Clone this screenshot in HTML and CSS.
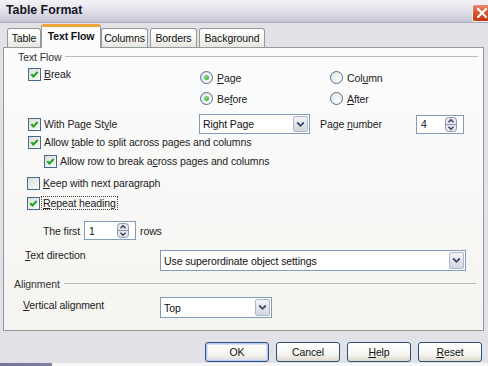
FILE: index.html
```html
<!DOCTYPE html>
<html lang="en">
  <head>
    <meta charset="UTF-8" />
    <title>Table Format</title>
    <link rel="stylesheet" href="styles.css">
  </head>
  <body>
    <div class="dialog">
      <!-- Title bar -->
      <div class="titlebar">
        <span class="title">Table Format</span>
        <span class="close-btn">
          <svg width="12" height="12" viewBox="0 0 12 12"><path d="M2 2 L10 10 M10 2 L2 10" stroke="#fff" stroke-width="2.2" stroke-linecap="round"/></svg>
        </span>
      </div>

      <!-- Tabs -->
      <div class="tabs">
        <div class="tab tab-table">Table</div>
        <div class="tab tab-flow active">Text Flow</div>
        <div class="tab tab-columns">Columns</div>
        <div class="tab tab-borders">Borders</div>
        <div class="tab tab-background">Background</div>
      </div>

      <!-- Tab page -->
      <div class="panel">
        <div class="section-head head-flow"><span>Text Flow</span><span class="rule"></span></div>

        <div class="break-row">
          <div class="break-col">
            <div class="opt">
              <span class="check"><svg width="11" height="11" viewBox="0 0 11 11"><path d="M2.3 5.3 L4.4 7.5 L8.7 3" fill="none" stroke="#21a121" stroke-width="2"/></svg></span>
              <span><u>B</u>reak</span>
            </div>
          </div>
          <div class="radio-grid">
            <div class="opt"><span class="radio on"></span><span><u>P</u>age</span></div>
            <div class="opt"><span class="radio"></span><span>Col<u>u</u>mn</span></div>
            <div class="opt"><span class="radio on"></span><span>Be<u>f</u>ore</span></div>
            <div class="opt"><span class="radio"></span><span><u>A</u>fter</span></div>
          </div>
        </div>

        <div class="style-row">
          <div class="opt opt-wide">
            <span class="check"><svg width="11" height="11" viewBox="0 0 11 11"><path d="M2.3 5.3 L4.4 7.5 L8.7 3" fill="none" stroke="#21a121" stroke-width="2"/></svg></span>
            <span>With Page St<u>y</u>le</span>
          </div>
          <div class="select sel-page">
            <span class="sel-text">Right Page</span>
            <span class="sel-btn"><svg width="9" height="7" viewBox="0 0 9 7"><path d="M1.2 1.5 L4.5 4.8 L7.8 1.5" fill="none" stroke="#3b4a6b" stroke-width="1.8"/></svg></span>
          </div>
          <span class="page-num-label">Page <u>n</u>umber</span>
          <div class="spin spin-page">
            <span class="spin-val">4</span>
            <svg class="spin-btn" width="12" height="15" viewBox="0 0 12 15"><rect x="0.5" y="0.5" width="11" height="14" rx="3" fill="#e4e5ec" stroke="#8e97ad"/><line x1="1" y1="7.5" x2="11" y2="7.5" stroke="#8e97ad"/><path d="M3.5 5.2 L6 2.8 L8.5 5.2" fill="none" stroke="#34405e" stroke-width="1.4"/><path d="M3.5 9.8 L6 12.2 L8.5 9.8" fill="none" stroke="#34405e" stroke-width="1.4"/></svg>
          </div>
        </div>

        <div class="opt row-split">
          <span class="check"><svg width="11" height="11" viewBox="0 0 11 11"><path d="M2.3 5.3 L4.4 7.5 L8.7 3" fill="none" stroke="#21a121" stroke-width="2"/></svg></span>
          <span>Allow <u>t</u>able to split across pages and columns</span>
        </div>

        <div class="opt row-break">
          <span class="check"><svg width="11" height="11" viewBox="0 0 11 11"><path d="M2.3 5.3 L4.4 7.5 L8.7 3" fill="none" stroke="#21a121" stroke-width="2"/></svg></span>
          <span>Allow row to break a<u>c</u>ross pages and columns</span>
        </div>

        <div class="opt row-keep">
          <span class="check"></span>
          <span><u>K</u>eep with next paragraph</span>
        </div>

        <div class="opt row-repeat">
          <span class="check"><svg width="11" height="11" viewBox="0 0 11 11"><path d="M2.3 5.3 L4.4 7.5 L8.7 3" fill="none" stroke="#21a121" stroke-width="2"/></svg></span>
          <span class="focus"><u>R</u>epeat heading</span>
        </div>

        <div class="first-row">
          <span class="first-label">The first</span>
          <div class="spin spin-first">
            <span class="spin-val">1</span>
            <svg class="spin-btn" width="12" height="15" viewBox="0 0 12 15"><rect x="0.5" y="0.5" width="11" height="14" rx="3" fill="#e4e5ec" stroke="#8e97ad"/><line x1="1" y1="7.5" x2="11" y2="7.5" stroke="#8e97ad"/><path d="M3.5 5.2 L6 2.8 L8.5 5.2" fill="none" stroke="#34405e" stroke-width="1.4"/><path d="M3.5 9.8 L6 12.2 L8.5 9.8" fill="none" stroke="#34405e" stroke-width="1.4"/></svg>
          </div>
          <span class="rows-label">rows</span>
        </div>

        <div class="field-row dir-row">
          <span class="field-label"><u>T</u>ext direction</span>
          <div class="select sel-dir">
            <span class="sel-text">Use superordinate object settings</span>
            <span class="sel-btn"><svg width="9" height="7" viewBox="0 0 9 7"><path d="M1.2 1.5 L4.5 4.8 L7.8 1.5" fill="none" stroke="#3b4a6b" stroke-width="1.8"/></svg></span>
          </div>
        </div>

        <div class="section-head head-align"><span>Alignment</span><span class="rule"></span></div>

        <div class="field-row valign-row">
          <span class="field-label"><u>V</u>ertical alignment</span>
          <div class="select sel-valign">
            <span class="sel-text">Top</span>
            <span class="sel-btn"><svg width="9" height="7" viewBox="0 0 9 7"><path d="M1.2 1.5 L4.5 4.8 L7.8 1.5" fill="none" stroke="#3b4a6b" stroke-width="1.8"/></svg></span>
          </div>
        </div>
      </div>

      <!-- Buttons -->
      <div class="button-row">
        <button class="btn default">OK</button>
        <button class="btn">Cancel</button>
        <button class="btn"><u>H</u>elp</button>
        <button class="btn"><u>R</u>eset</button>
      </div>

      <div class="taskbar"></div>
    </div>
  </body>
</html>
```

FILE: styles.css
```css
body {
  margin: 0;
  background: #e2e1e6;
  font-family: "Liberation Sans", Arial, sans-serif;
  font-size: 10.5px;
  letter-spacing: -0.1px;
  color: #222;
}

u {
  text-underline-offset: 1px;
}

.dialog {
  width: 488px;
  height: 366px;
  overflow: hidden;
  display: flex;
  flex-direction: column;
  background: #e2e1e6;
}

/* Title bar */
.titlebar {
  flex: none;
  height: 22px;
  display: flex;
  align-items: flex-start;
  background: linear-gradient(#f3f3f7, #e1e1ea 50%, #c4c4d4);
  border-bottom: 1px solid #a9a9bb;
}

.title {
  padding: 3px 0 0 6px;
  font-size: 12.3px;
  line-height: 14px;
  letter-spacing: 0;
  font-weight: bold;
  color: #161626;
}

.close-btn {
  margin: 4px -6px 0 auto;
  width: 22px;
  height: 18px;
  box-sizing: border-box;
  border: 1px solid #f4f0f0;
  border-radius: 3px;
  background: linear-gradient(#e98a70, #d5532f 50%, #c0390f);
  display: flex;
  align-items: center;
  justify-content: flex-start;
  padding-left: 3px;
}

/* Tabs */
.tabs {
  flex: none;
  height: 24px;
  display: flex;
  align-items: flex-end;
  padding-left: 7px;
}

.tab {
  height: 19px;
  box-sizing: border-box;
  border: 1px solid #919b9c;
  border-bottom: none;
  border-radius: 3px 3px 0 0;
  background: linear-gradient(#ffffff, #f4f4f1 60%, #e6e5de);
  text-align: center;
  line-height: 18px;
  color: #111;
}

.tab-table { width: 34px; }
.tab-columns { width: 47px; }
.tab-borders { width: 47px; margin-left: 2px; }
.tab-background { width: 66px; margin-left: 2px; }

.tab.active {
  position: relative;
  z-index: 2;
  width: 60px;
  height: 24px;
  margin-bottom: -1px;
  border-top: 3px solid #f0a43a;
  background: #fcfcfe;
  font-weight: bold;
  line-height: 19px;
}

/* Tab page */
.panel {
  flex: none;
  width: 481px;
  height: 284px;
  margin-left: 3px;
  box-sizing: border-box;
  border: 1px solid #919b9c;
  background: linear-gradient(#fcfcfd, #f5f4f0);
}

.section-head {
  height: 13px;
  display: flex;
  align-items: center;
  color: #333;
}

.section-head .rule {
  flex: 1;
  height: 0;
  border-top: 1px solid #bcbcb4;
  margin-left: 4px;
}

.head-flow {
  margin-top: 2px;
  padding-left: 14px;
}

.head-flow .rule { margin-right: 5px; }

.head-align {
  margin-top: 6px;
  padding-left: 10px;
}

.head-align .rule { margin-right: 7px; }

.opt {
  height: 14px;
  display: flex;
  align-items: center;
  gap: 3px;
  white-space: nowrap;
}

.check {
  flex: none;
  width: 13px;
  height: 13px;
  box-sizing: border-box;
  border: 1px solid #46698f;
  background: linear-gradient(135deg, #dcdcd6, #fbfbf9);
  display: flex;
}

.radio {
  flex: none;
  width: 13px;
  height: 13px;
  box-sizing: border-box;
  border: 1px solid #4a719c;
  border-radius: 50%;
  background: radial-gradient(circle at 65% 65%, #ffffff, #dcdcd6);
  display: flex;
  align-items: center;
  justify-content: center;
  margin-right: 1px;
}

.radio.on::after {
  content: "";
  width: 5px;
  height: 5px;
  border-radius: 50%;
  background: radial-gradient(circle at 35% 35%, #8ee08e, #1f9e1f);
}

.break-row {
  margin-top: 4px;
  display: flex;
}

.break-col {
  width: 196px;
  box-sizing: border-box;
  padding: 0 0 0 24px;
}

.radio-grid {
  display: grid;
  grid-template-columns: 130px auto;
  grid-auto-rows: 21px;
  align-items: center;
}

.style-row {
  margin-top: 5px;
  height: 20px;
  display: flex;
  align-items: center;
}

.opt-wide {
  width: 195px;
  box-sizing: border-box;
  padding-left: 24px;
}

.select {
  display: flex;
  align-items: stretch;
  box-sizing: border-box;
  border: 1px solid #7f9db9;
  background: #fff;
}

.sel-text {
  flex: 1;
  padding-left: 3px;
  display: flex;
  align-items: center;
  color: #111;
}

.sel-btn {
  width: 15px;
  margin: 1px;
  box-sizing: border-box;
  border: 1px solid #b0b6c6;
  border-radius: 2px;
  background: linear-gradient(#f4f4f8, #d3d6e0);
  display: flex;
  align-items: center;
  justify-content: center;
}

.sel-page { width: 111px; height: 20px; }
.sel-dir { width: 306px; height: 21px; }
.sel-valign { width: 112px; height: 21px; }

.page-num-label {
  width: 96px;
  margin-left: 10px;
}

.spin {
  display: flex;
  align-items: center;
  box-sizing: border-box;
  border: 1px solid #7f9db9;
  background: #fff;
}

.spin-val {
  flex: 1;
  padding-left: 4px;
  color: #111;
}

.spin-btn {
  margin-right: 6px;
}

.spin-page { width: 48px; height: 19px; }
.spin-first { width: 52px; height: 19px; }

.row-split { margin-top: 1px; padding-left: 24px; }
.row-break { margin-top: 5px; padding-left: 40px; }
.row-keep { margin-top: 8px; padding-left: 23px; }
.row-repeat { margin-top: 6px; padding-left: 23px; }

.focus {
  margin-left: -2px;
  padding: 0 1px;
  line-height: 12px;
  border: 1px dotted #444;
}

.first-row {
  margin-top: 11px;
  height: 19px;
  display: flex;
  align-items: center;
  padding-left: 39px;
}

.first-label { width: 41px; }

.rows-label { margin-left: 4px; }

.field-row {
  display: flex;
  align-items: flex-start;
}

.field-label {
  width: 156px;
  box-sizing: border-box;
}

.dir-row { margin-top: 10px; }
.dir-row .field-label { padding-left: 21px; line-height: 11px; }

.valign-row { margin-top: 7px; }
.valign-row .field-label { padding-left: 19px; line-height: 16px; }

/* Buttons */
.button-row {
  flex: none;
  display: flex;
  justify-content: flex-end;
  gap: 7px;
  padding: 11px 6px 0 0;
}

.btn {
  width: 64px;
  height: 20px;
  padding: 0;
  box-sizing: border-box;
  border: 1px solid #2d4f7f;
  border-radius: 3px;
  background: linear-gradient(#ffffff, #f4f4f0 65%, #dcd8cc);
  font-family: "Liberation Sans", Arial, sans-serif;
  font-size: 10.5px;
  letter-spacing: -0.1px;
  color: #111;
}

.btn.default {
  box-shadow: inset 0 0 0 1px #b6cbf0, inset 0 0 0 2px #d6e2f8;
}

.taskbar {
  flex: none;
  height: 3px;
  margin-top: 1px;
  background: linear-gradient(to right, #6f7592 0, #7c82a0 52px, #f6f6f6 52px);
}
```
